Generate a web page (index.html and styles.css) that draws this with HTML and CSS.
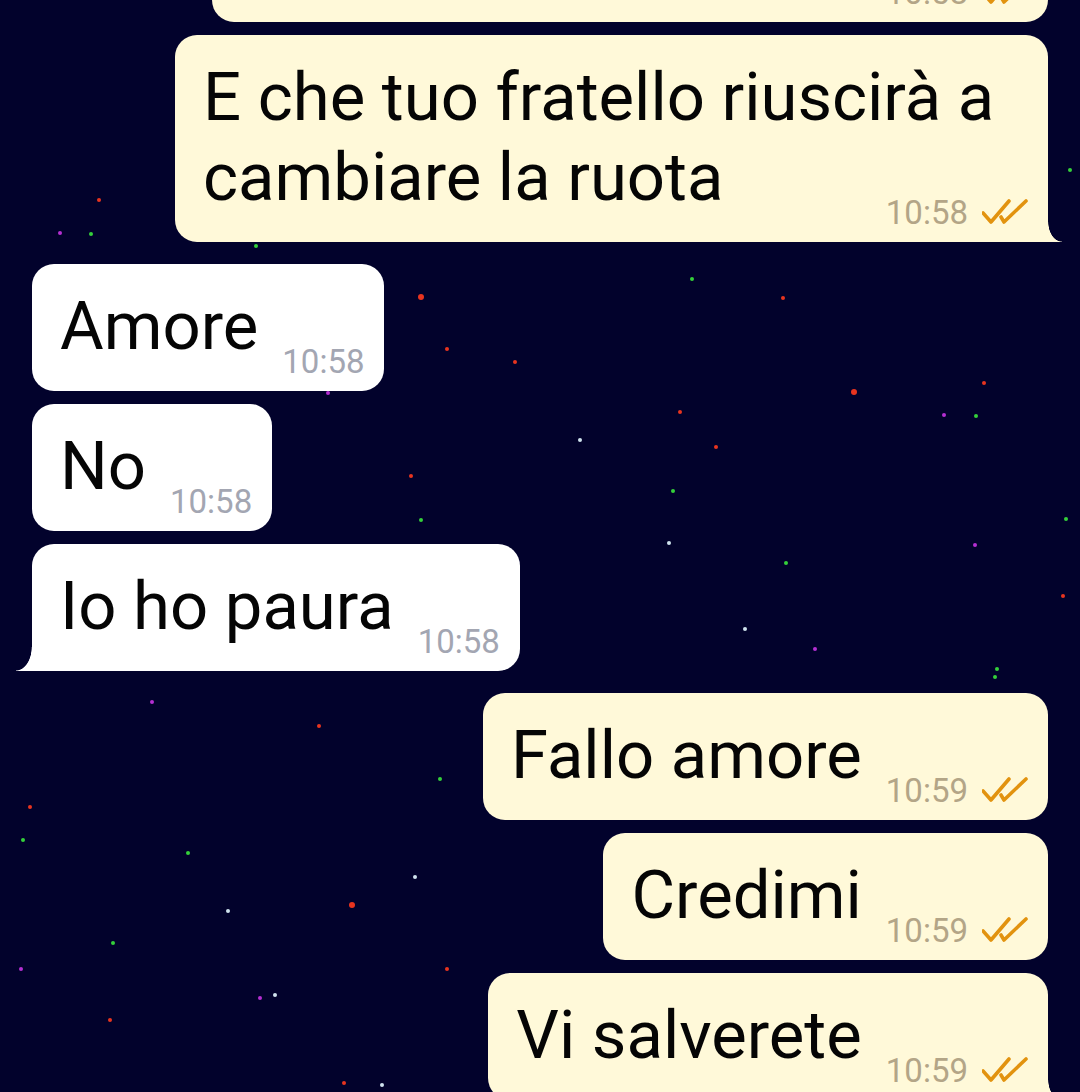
FILE: index.html
```html
<!DOCTYPE html>
<html lang="it">
<head>
    <meta charset="UTF-8">
    <title>Chat</title>
    <link rel="stylesheet" href="styles.css">
</head>
<body>
    <div class="chat">
        <!-- sfondo stellato -->
        <div class="sky">
            <span class="star red" style="left:97px;top:198px"></span>
            <span class="star purple" style="left:58px;top:231px"></span>
            <span class="star green" style="left:89px;top:232px"></span>
            <span class="star green" style="left:254px;top:244px"></span>
            <span class="star green" style="left:1068px;top:168px"></span>
            <span class="star red big" style="left:418px;top:294px"></span>
            <span class="star green" style="left:690px;top:277px"></span>
            <span class="star red" style="left:781px;top:296px"></span>
            <span class="star red" style="left:445px;top:347px"></span>
            <span class="star red" style="left:513px;top:360px"></span>
            <span class="star red big" style="left:851px;top:389px"></span>
            <span class="star red" style="left:982px;top:381px"></span>
            <span class="star purple" style="left:942px;top:413px"></span>
            <span class="star green" style="left:974px;top:414px"></span>
            <span class="star red" style="left:678px;top:410px"></span>
            <span class="star red" style="left:714px;top:445px"></span>
            <span class="star white" style="left:578px;top:438px"></span>
            <span class="star purple" style="left:326px;top:391px"></span>
            <span class="star red" style="left:409px;top:474px"></span>
            <span class="star green" style="left:671px;top:489px"></span>
            <span class="star green" style="left:419px;top:518px"></span>
            <span class="star green" style="left:1064px;top:517px"></span>
            <span class="star white" style="left:667px;top:541px"></span>
            <span class="star purple" style="left:973px;top:543px"></span>
            <span class="star green" style="left:784px;top:561px"></span>
            <span class="star red" style="left:1061px;top:594px"></span>
            <span class="star white" style="left:743px;top:627px"></span>
            <span class="star purple" style="left:813px;top:647px"></span>
            <span class="star green" style="left:995px;top:667px"></span>
            <span class="star green" style="left:993px;top:675px"></span>
            <span class="star purple" style="left:150px;top:700px"></span>
            <span class="star red" style="left:317px;top:724px"></span>
            <span class="star green" style="left:438px;top:777px"></span>
            <span class="star red" style="left:28px;top:805px"></span>
            <span class="star green" style="left:21px;top:838px"></span>
            <span class="star green" style="left:186px;top:851px"></span>
            <span class="star white" style="left:413px;top:875px"></span>
            <span class="star red big" style="left:349px;top:902px"></span>
            <span class="star white" style="left:226px;top:909px"></span>
            <span class="star green" style="left:111px;top:941px"></span>
            <span class="star purple" style="left:19px;top:967px"></span>
            <span class="star red" style="left:445px;top:967px"></span>
            <span class="star white" style="left:273px;top:993px"></span>
            <span class="star purple" style="left:258px;top:996px"></span>
            <span class="star red" style="left:108px;top:1018px"></span>
            <span class="star red" style="left:342px;top:1081px"></span>
            <span class="star white" style="left:380px;top:1083px"></span>
        </div>

        <div class="thread">
            <div class="row out first">
                <div class="bubble out cut">Tranquilla<span class="meta"><span class="time">10:58</span><svg class="ticks" viewBox="0 0 48 26"><path d="M1 15 L9 24 L27 3 M19 19 L22 24 L44 3"/></svg></span></div>
            </div>
            <div class="row out">
                <div class="bubble out tail-right">E che tuo fratello riuscirà a cambiare la ruota<span class="meta"><span class="time">10:58</span><svg class="ticks" viewBox="0 0 48 26"><path d="M1 15 L9 24 L27 3 M19 19 L22 24 L44 3"/></svg></span></div>
            </div>

            <div class="row in new">
                <div class="bubble in">Amore<span class="meta"><span class="time">10:58</span></span></div>
            </div>
            <div class="row in">
                <div class="bubble in">No<span class="meta"><span class="time">10:58</span></span></div>
            </div>
            <div class="row in">
                <div class="bubble in tail-left">Io ho paura<span class="meta"><span class="time">10:58</span></span></div>
            </div>

            <div class="row out new">
                <div class="bubble out">Fallo amore<span class="meta"><span class="time">10:59</span><svg class="ticks" viewBox="0 0 48 26"><path d="M1 15 L9 24 L27 3 M19 19 L22 24 L44 3"/></svg></span></div>
            </div>
            <div class="row out">
                <div class="bubble out">Credimi<span class="meta"><span class="time">10:59</span><svg class="ticks" viewBox="0 0 48 26"><path d="M1 15 L9 24 L27 3 M19 19 L22 24 L44 3"/></svg></span></div>
            </div>
            <div class="row out">
                <div class="bubble out tail-right">Vi salverete<span class="meta"><span class="time">10:59</span><svg class="ticks" viewBox="0 0 48 26"><path d="M1 15 L9 24 L27 3 M19 19 L22 24 L44 3"/></svg></span></div>
            </div>
        </div>
    </div>
</body>
</html>
```

FILE: styles.css
```css
body {
    margin: 0;
    padding: 0;
    background-color: #02022c;
    font-family: Roboto, "Noto Sans", sans-serif;
    overflow: hidden;
}
.chat {
    position: relative;
    height: 1092px;
    overflow: hidden;
}
.sky {
    position: absolute;
    top: 0;
    left: 0;
    right: 0;
    bottom: 0;
}
.star {
    position: absolute;
    width: 4px;
    height: 4px;
    border-radius: 50%;
}
.star.big {
    width: 6px;
    height: 6px;
}
.star.red { background-color: #e8341f; }
.star.green { background-color: #34d03a; }
.star.purple { background-color: #b42fd2; }
.star.white { background-color: #cfe3ee; }

.thread {
    position: relative;
    display: flex;
    flex-direction: column;
    padding: 0 32px;
}
.row {
    display: flex;
    margin-top: 13px;
}
.row.new {
    margin-top: 22px;
}
.row.first {
    margin-top: -105px;
}
.row.out {
    justify-content: flex-end;
}
.row.in {
    justify-content: flex-start;
}
.bubble {
    position: relative;
    display: flow-root;
    box-sizing: border-box;
    max-width: 873px;
    padding: 22px 18px 10px 28px;
    border-radius: 22px;
    font-size: 67px;
    line-height: 80px;
    color: #050505;
}
.bubble.out {
    background-color: #fff9d9;
}
.bubble.in {
    background-color: #ffffff;
    padding-right: 20px;
}
.bubble.cut {
    width: 836px;
}
.meta {
    float: right;
    display: flex;
    align-items: center;
    gap: 14px;
    margin: 57px 0 0 24px;
    font-size: 33px;
    line-height: 38px;
}
.bubble.in .meta {
    color: #a3a6b2;
}
.bubble.out .meta {
    color: #b3a587;
}
.ticks {
    width: 48px;
    height: 26px;
    margin-top: -4px;
    fill: none;
    stroke: #e2930f;
    stroke-width: 3.6;
    stroke-linecap: round;
    stroke-linejoin: round;
}
.bubble.tail-right {
    border-bottom-right-radius: 0;
}
.bubble.tail-right::after {
    content: "";
    position: absolute;
    left: 100%;
    bottom: 0;
    width: 14px;
    height: 20px;
    background: radial-gradient(ellipse 14px 20px at 100% 0, transparent 96%, #fff9d9 100%);
}
.bubble.tail-left {
    border-bottom-left-radius: 0;
}
.bubble.tail-left::after {
    content: "";
    position: absolute;
    right: 100%;
    bottom: 0;
    width: 16px;
    height: 24px;
    background: radial-gradient(ellipse 16px 24px at 0 0, transparent 96%, #ffffff 100%);
}
```
